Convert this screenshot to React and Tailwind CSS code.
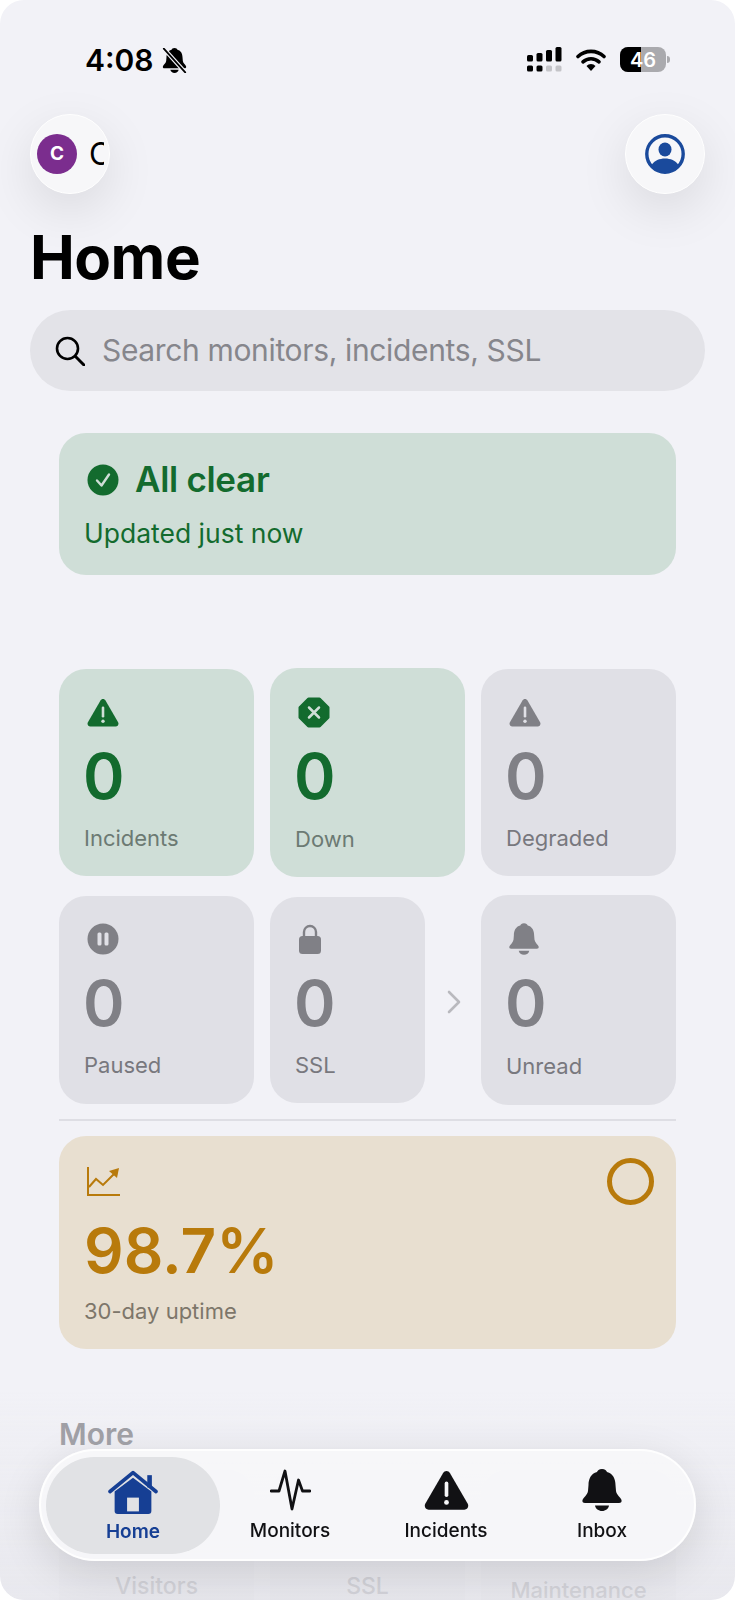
const green = '#136b2e'
const gray = '#808086'
const greenBg = '#cfded7'
const grayBg = '#e0e0e6'

function Triangle({ color, mark, className }) {
  return (
    <svg viewBox="0 0 32 29" className={className}>
      <path
        d="M16 1c1 0 1.9.5 2.5 1.5l12.6 21.8c1 1.9-.2 4.2-2.4 4.2H3.3C1.100 28.500-.1 26.200.9 24.300L13.500 2.500C14.100 1.500 15 1 16 1z"
        fill={color}
      />
      <rect x="14.700" y="8.500" width="2.600" height="11" rx="1.300" fill={mark} />
      <circle cx="16" cy="23.300" r="1.700" fill={mark} />
    </svg>
  )
}

function Octagon({ color, mark, className }) {
  return (
    <svg viewBox="0 0 32 31" className={className}>
      <path d="M10.500 2h11L30 10.500v10L21.500 29h-11L2 20.500v-10z" fill={color} stroke={color} strokeWidth="3" strokeLinejoin="round" />
      <path d="M11 10.500l10 10M21 10.500l-10 10" stroke={mark} strokeWidth="2.500" strokeLinecap="round" />
    </svg>
  )
}

function Pause({ color, mark, className }) {
  return (
    <svg viewBox="0 0 32 32" className={className}>
      <circle cx="16" cy="16" r="15.500" fill={color} />
      <rect x="10.500" y="9.500" width="4" height="13" rx="1.500" fill={mark} />
      <rect x="17.500" y="9.500" width="4" height="13" rx="1.500" fill={mark} />
    </svg>
  )
}

function Lock({ color, className }) {
  return (
    <svg viewBox="0 0 22 30" className={className}>
      <path d="M5 13V8a6 6 0 0 1 12 0v5" fill="none" stroke={color} strokeWidth="2.400" />
      <rect x="0" y="12" width="22" height="18" rx="3.500" fill={color} />
    </svg>
  )
}

function Bell({ color, className }) {
  return (
    <svg viewBox="0 0 40 42" className={className}>
      <path
        d="M20 0c-3 0-4.500 1.500-5 3C9 4.500 6.500 10 6.500 16L6 22c-.5 4-5 7-5.500 9C0 33 1 34 3 34h34c2 0 3-1 2.500-3-.5-2-5-5-5.500-9l-.5-6c0-6-2.500-11.500-8.500-13-.5-1.500-2-3-5-3z"
        fill={color}
      />
      <path d="M13 36.500h14c-.5 3.200-3.500 5.500-7 5.500s-6.500-2.300-7-5.500z" fill={color} />
    </svg>
  )
}

function BellOff({ className }) {
  return (
    <svg viewBox="0 0 40 42" className={className}>
      <path
        d="M20 0c-3 0-4.500 1.500-5 3C9 4.500 6.500 10 6.500 16L6 22c-.5 4-5 7-5.500 9C0 33 1 34 3 34h34c2 0 3-1 2.500-3-.5-2-5-5-5.500-9l-.5-6c0-6-2.500-11.500-8.500-13-.5-1.500-2-3-5-3z"
        fill="#000"
      />
      <path d="M13 36.500h14c-.5 3.200-3.500 5.500-7 5.500s-6.500-2.300-7-5.500z" fill="#000" />
      <path d="M2 1l36 40" stroke="#f2f2f7" strokeWidth="7" />
      <path d="M2 1l36 40" stroke="#000" strokeWidth="3" strokeLinecap="round" />
    </svg>
  )
}

function Signal() {
  return (
    <svg viewBox="0 0 35 25" className="h-[25px] w-[35px]">
      <rect x="0" y="8" width="6" height="6.500" rx="1.500" fill="#000" />
      <rect x="9.500" y="6" width="6" height="8.500" rx="1.500" fill="#000" />
      <rect x="19" y="3" width="6" height="11.500" rx="1.500" fill="#000" />
      <rect x="28.500" y="0" width="6" height="14.500" rx="1.500" fill="#000" />
      <rect x="0" y="18.500" width="6" height="6" rx="1.500" fill="#000" />
      <rect x="9.500" y="18.500" width="6" height="6" rx="1.500" fill="#000" />
      <rect x="19" y="18.500" width="6" height="6" rx="1.500" fill="#c4c4c8" />
      <rect x="28.500" y="18.500" width="6" height="6" rx="1.500" fill="#c4c4c8" />
    </svg>
  )
}

function Wifi() {
  return (
    <svg viewBox="0 0 30 22" className="h-[22px] w-[30px]">
      <path d="M2 7.500a19 19 0 0 1 26 0" fill="none" stroke="#000" strokeWidth="3.600" strokeLinecap="round" />
      <path d="M7 12.800a12 12 0 0 1 16 0" fill="none" stroke="#000" strokeWidth="3.600" strokeLinecap="round" />
      <path d="M10.500 17a6 6 0 0 1 9 0L15 22z" fill="#000" />
    </svg>
  )
}

function Battery() {
  return (
    <div className="flex items-center gap-[1px]">
      <div className="relative flex h-[25px] w-[46px] overflow-hidden rounded-[8px] bg-[#aaaaae]">
        <div className="h-full w-[21px] bg-black"></div>
        <div className="absolute inset-0 flex items-center justify-center text-[20px] font-semibold text-white">46</div>
      </div>
      <div className="h-[7px] w-[3px] rounded-r-full bg-[#aaaaae]"></div>
    </div>
  )
}

function UserIcon() {
  return (
    <svg viewBox="0 0 40 40" className="h-[40px] w-[40px]">
      <circle cx="20" cy="20" r="18.200" fill="none" stroke="#1a4a9c" strokeWidth="3.400" />
      <ellipse cx="20" cy="15.500" rx="6.500" ry="7" fill="#1a4a9c" />
      <path d="M6.500 31c3-4.500 8-6.500 13.500-6.500S30.500 26.500 33.500 31c-3.500 4-8 6.500-13.500 6.500S10 35 6.500 31z" fill="#1a4a9c" />
    </svg>
  )
}

function StatCard({ icon, label, tone, className, labelClass }) {
  const isGreen = tone === 'green'
  return (
    <div
      className={`rounded-[27px] pl-[25px] ${isGreen ? 'bg-[#cfded7]' : 'bg-[#e0e0e6]'} ${className}`}
    >
      <div className="flex h-[30px] items-center pl-px">{icon}</div>
      <div
        className={`mt-[18px] -ml-px text-[63px] leading-[62px] font-semibold ${isGreen ? 'text-[#136b2e]' : 'text-[#808086]'}`}
      >
        0
      </div>
      <div className={`mt-[17px] text-[22px] leading-[28px] ${isGreen ? 'text-[#6c7a73]' : 'text-[#78787e]'} ${labelClass}`}>
        {label}
      </div>
    </div>
  )
}

function App() {
  return (
    <div className="h-[1600px] w-[735px] overflow-hidden bg-white font-[Inter,sans-serif]">
      <div className="relative h-[1600px] overflow-hidden rounded-[24px] bg-[#f2f2f7]">
        {/* status bar */}
        <div className="flex h-[114px] items-start justify-between pt-[47px] pr-[65px] pl-[85px]">
          <div className="flex items-center gap-[8px]">
            <span className="text-[30px] leading-[26px] font-semibold text-black">4:08</span>
            <BellOff className="h-[25px] w-[25px]" />
          </div>
          <div className="flex items-center gap-[14px]">
            <Signal />
            <Wifi />
            <Battery />
          </div>
        </div>

        {/* top buttons */}
        <div className="flex items-center justify-between px-[30px]">
          <div className="flex h-[80px] w-[80px] items-center gap-[12px] rounded-full border border-white bg-[#f7f7f9] pl-[6px] shadow-[0_16px_50px_rgba(0,0,0,0.10)]">
            <div className="flex h-[40px] w-[40px] shrink-0 items-center justify-center rounded-full bg-[#7b2d8e] text-[19px] font-bold text-white">
              C
            </div>
            <div className="w-[15px] overflow-hidden text-[31px] text-black">C</div>
          </div>
          <div className="flex h-[80px] w-[80px] items-center justify-center rounded-full border border-white bg-[#f7f7f9] shadow-[0_16px_50px_rgba(0,0,0,0.10)]">
            <UserIcon />
          </div>
        </div>

        <h1 className="mt-[27px] px-[30px] text-[60px] leading-[72px] font-bold tracking-[-0.5px] text-black">Home</h1>

        <div className="mx-[30px] mt-[17px] flex h-[81px] items-center gap-[17px] rounded-full bg-[#e3e3e8] pl-[25px]">
          <svg viewBox="0 0 30 30" className="h-[30px] w-[30px]">
            <circle cx="12.500" cy="12.500" r="10.500" fill="none" stroke="#000" strokeWidth="2.600" />
            <path d="M20.500 20.500L29 29" stroke="#000" strokeWidth="3" strokeLinecap="round" />
          </svg>
          <span className="text-[30px] tracking-[-0.35px] text-[#86868c]">Search monitors, incidents, SSL</span>
        </div>

        <div className="px-[59px]">
          {/* all clear banner */}
          <div className="mt-[42px] h-[142px] rounded-[27px] bg-[#cfded7] pt-[29px] pl-[25px]">
            <div className="flex h-[35px] items-center gap-[16px] pl-[3px]">
              <svg viewBox="0 0 32 32" className="h-[32px] w-[32px]">
                <circle cx="16" cy="16" r="15.500" fill={green} />
                <path d="M10 16.500l4.500 5L22 10.500" fill="none" stroke={greenBg} strokeWidth="2.400" strokeLinecap="round" strokeLinejoin="round" />
              </svg>
              <span className="text-[35px] font-semibold tracking-[-0.3px] text-[#136b2e]">All clear</span>
            </div>
            <div className="mt-[20px] text-[26.5px] leading-[32px] text-[#136b2e]">Updated just now</div>
          </div>

          {/* stat grid */}
          <div className="mt-[94px] grid grid-cols-3 gap-x-[16px] gap-y-[20px]">
            <StatCard
              tone="green"
              label="Incidents"
              className="h-[207px] pt-[28px]"
              icon={<Triangle color={green} mark={greenBg} className="ml-[2px] h-[29px] w-[32px]" />}
            />
            <StatCard
              tone="green"
              label="Down"
              className="-my-px h-[209px] pt-[29px]"
              labelClass="pt-px"
              icon={<Octagon color={green} mark={greenBg} className="ml-[2px] h-[31px] w-[32px]" />}
            />
            <StatCard
              tone="gray"
              label="Degraded"
              className="h-[207px] pt-[28px]"
              icon={<Triangle color={gray} mark={grayBg} className="ml-[2px] h-[29px] w-[32px]" />}
            />
            <StatCard
              tone="gray"
              label="Paused"
              className="h-[208px] pt-[28px]"
              icon={<Pause color={gray} mark={grayBg} className="ml-[2px] h-[32px] w-[32px]" />}
            />
            <div className="flex items-center">
              <StatCard
                tone="gray"
                label="SSL"
                className="h-[206px] w-[155px] shrink-0 pt-[27px]"
                icon={<Lock color={gray} className="ml-[3px] h-[30px] w-[22px]" />}
              />
              <svg viewBox="0 0 14 24" className="mt-[3px] ml-[22px] h-[24px] w-[14px]">
                <path d="M2 2l10 10L2 22" fill="none" stroke="#b9b9be" strokeWidth="2.600" strokeLinecap="round" strokeLinejoin="round" />
              </svg>
            </div>
            <StatCard
              tone="gray"
              label="Unread"
              className="-my-px h-[210px] pt-[29px]"
              labelClass="pt-px"
              icon={<Bell color={gray} className="ml-[2px] h-[32px] w-[30px]" />}
            />
          </div>

          <div className="mt-[15px] h-[2px] bg-[#dedee4]"></div>

          {/* uptime */}
          <div className="mt-[15px] flex h-[213px] justify-between rounded-[27px] bg-[#e8dfd0] pt-[22px] pr-[22px] pl-[25px]">
            <div>
              <svg viewBox="0 0 33 29" className="mt-[9px] ml-[3px] h-[29px] w-[33px]">
                <path d="M1 0v28h32" fill="none" stroke="#b87a0b" strokeWidth="2" />
                <path d="M2 20l7-8 7 6 11-11" fill="none" stroke="#b87a0b" strokeWidth="2" />
                <path d="M22 4l10-3-2 10z" fill="#b87a0b" />
              </svg>
              <div className="mt-[24px] text-[62px] leading-[62px] font-semibold text-[#b87a0b]">98.7%</div>
              <div className="mt-[15px] text-[22px] leading-[28px] text-[#7d766a]">30-day uptime</div>
            </div>
            <div className="h-[47px] w-[47px] rounded-full border-[5px] border-[#b87a0b]"></div>
          </div>

          {/* more section, mostly hidden by the tab bar */}
          <div className="mt-[67px] text-[30px] leading-[36px] font-semibold text-[#98989e]">More</div>
          <div className="mt-[18px] grid grid-cols-3 gap-x-[16px]">
            <div className="flex h-[200px] flex-col items-center rounded-[27px] bg-[#eeeef3] pt-[100px] text-[23px] leading-[32px] font-medium text-[#bdbdc3]">
              Visitors
            </div>
            <div className="flex h-[200px] flex-col items-center rounded-[27px] bg-[#eeeef3] pt-[100px] text-[23px] leading-[32px] font-medium text-[#bdbdc3]">
              SSL
            </div>
            <div className="flex h-[200px] flex-col items-center rounded-[27px] bg-[#eeeef3] pt-[104px] text-[22px] leading-[32px] font-medium text-[#bdbdc3]">
              Maintenance
            </div>
          </div>
        </div>

        {/* fade under the tab bar */}
        <div className="absolute top-[1390px] right-0 left-0 h-[210px] bg-linear-to-b from-transparent to-[#e2e2e8]/60 backdrop-blur-[0.5px]"></div>

        {/* floating tab bar */}
        <div className="absolute top-[1449px] left-[39px] flex h-[112px] w-[657px] items-center rounded-full border-2 border-white/90 bg-[#f7f7f9]/95 pl-[5px] shadow-[0_12px_44px_rgba(0,0,0,0.12)]">
          <div className="flex h-[97px] w-[174px] shrink-0 flex-col items-center rounded-full bg-[#e1e2e5] pt-[13px]">
            <svg viewBox="0 0 49 43" className="h-[44px] w-[50px]">
              <path d="M24.500 7.500L42.500 21v19a3 3 0 0 1-3 3h-30a3 3 0 0 1-3-3V21z" fill="#163f94" />
              <rect x="38.500" y="5" width="4.500" height="12" fill="#163f94" />
              <path d="M2 21L24.500 2.500 47 21" fill="none" stroke="#163f94" strokeWidth="3.600" strokeLinecap="round" strokeLinejoin="round" />
              <rect x="18.700" y="27" width="11.600" height="13.500" fill="#e1e2e5" />
            </svg>
            <span className="mt-[4px] text-[19px] leading-[28px] font-semibold text-[#163f94]">Home</span>
          </div>
          <div className="-ml-[8px] grid w-[468px] grid-cols-3 pt-[4px]">
            <div className="flex flex-col items-center">
              <svg viewBox="0 0 41 42" className="h-[42px] w-[41px]">
                <path d="M1 22h8l6-20 7 38 6.500-29 4 11H40" fill="none" stroke="#111114" strokeWidth="2.800" strokeLinecap="round" strokeLinejoin="round" />
              </svg>
              <span className="mt-[6px] text-[19px] leading-[28px] font-medium text-[#111114]">Monitors</span>
            </div>
            <div className="flex flex-col items-center">
              <Triangle color="#111114" mark="#f7f7f9" className="h-[42px] w-[45px]" />
              <span className="mt-[6px] text-[19px] leading-[28px] font-medium text-[#111114]">Incidents</span>
            </div>
            <div className="flex flex-col items-center">
              <Bell color="#111114" className="h-[42px] w-[40px]" />
              <span className="mt-[6px] text-[19px] leading-[28px] font-medium text-[#111114]">Inbox</span>
            </div>
          </div>
        </div>
      </div>
    </div>
  )
}

export default App
